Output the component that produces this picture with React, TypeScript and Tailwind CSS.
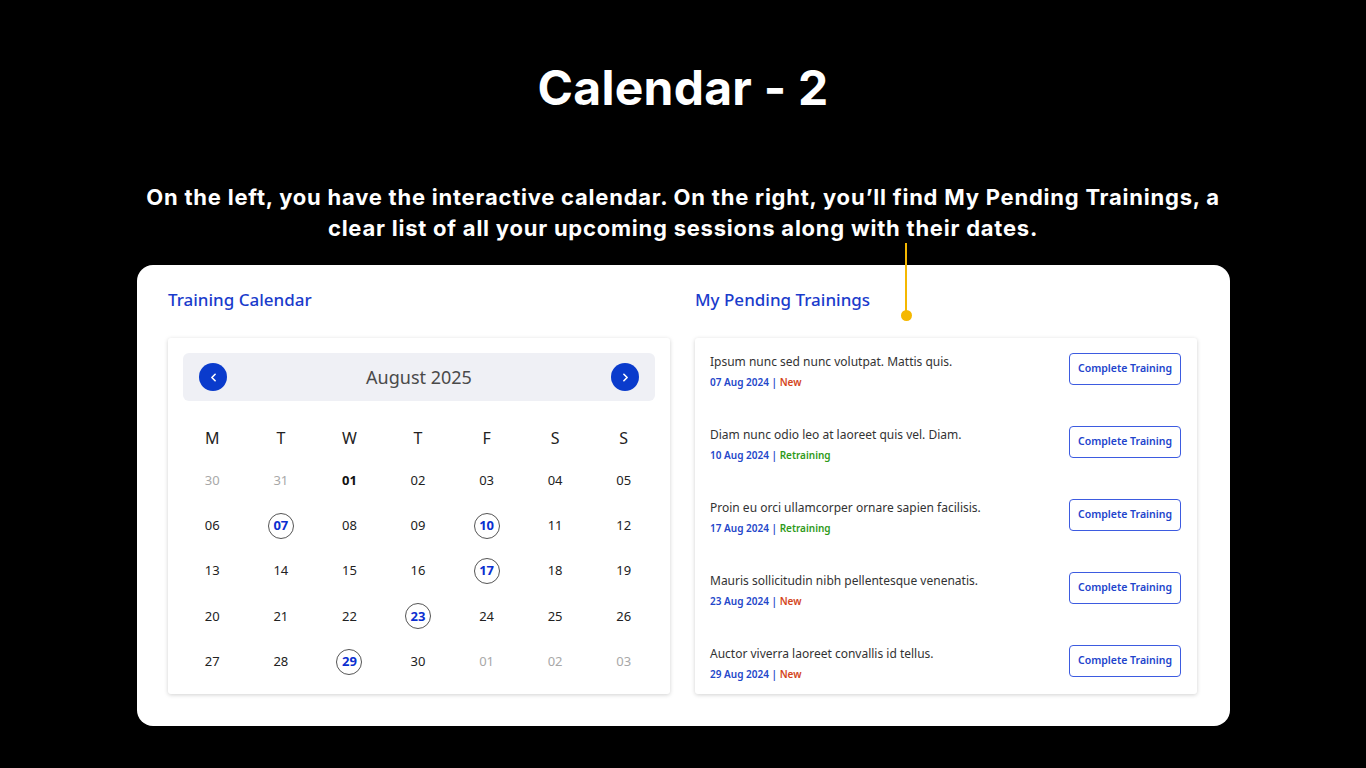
import { ChevronLeft, ChevronRight } from "lucide-react";

const weekdays = ["M", "T", "W", "T", "F", "S", "S"];

type Day = { label: string; muted?: boolean; bold?: boolean; marked?: boolean };

const days: Day[] = [
  { label: "30", muted: true },
  { label: "31", muted: true },
  { label: "01", bold: true },
  { label: "02" },
  { label: "03" },
  { label: "04" },
  { label: "05" },
  { label: "06" },
  { label: "07", marked: true },
  { label: "08" },
  { label: "09" },
  { label: "10", marked: true },
  { label: "11" },
  { label: "12" },
  { label: "13" },
  { label: "14" },
  { label: "15" },
  { label: "16" },
  { label: "17", marked: true },
  { label: "18" },
  { label: "19" },
  { label: "20" },
  { label: "21" },
  { label: "22" },
  { label: "23", marked: true },
  { label: "24" },
  { label: "25" },
  { label: "26" },
  { label: "27" },
  { label: "28" },
  { label: "29", marked: true },
  { label: "30" },
  { label: "01", muted: true },
  { label: "02", muted: true },
  { label: "03", muted: true },
];

const trainings = [
  { title: "Ipsum nunc sed nunc volutpat. Mattis quis.", date: "07 Aug 2024", kind: "New" },
  { title: "Diam nunc odio leo at laoreet quis vel. Diam.", date: "10 Aug 2024", kind: "Retraining" },
  { title: "Proin eu orci ullamcorper ornare sapien facilisis.", date: "17 Aug 2024", kind: "Retraining" },
  { title: "Mauris sollicitudin nibh pellentesque venenatis.", date: "23 Aug 2024", kind: "New" },
  { title: "Auctor viverra laoreet convallis id tellus.", date: "29 Aug 2024", kind: "New" },
];

function Calendar() {
  return (
    <div className="h-[356px] rounded-[3px] bg-white pt-[15px] shadow-[0_1px_4px_rgba(0,0,0,0.18)]">
      {/* Month header */}
      <div className="mx-[15px] flex h-[48px] items-center justify-between rounded-[6px] bg-[#eff0f5] px-[16px]">
        <button className="flex h-[28px] w-[28px] items-center justify-center rounded-full bg-[#0a3bcc] text-white">
          <ChevronLeft size={13} strokeWidth={3} />
        </button>
        <span className="text-[18px] text-[#4a4a4a]">August 2025</span>
        <button className="flex h-[28px] w-[28px] items-center justify-center rounded-full bg-[#0a3bcc] text-white">
          <ChevronRight size={13} strokeWidth={3} />
        </button>
      </div>

      <div className="ml-[10px] mr-[12px] mt-[17px] grid grid-cols-7">
        {weekdays.map((d, i) => (
          <div key={i} className="flex h-[40px] items-center justify-center text-[16px] text-[#222]">
            {d}
          </div>
        ))}
        {days.map((d, i) => (
          <div key={i} className="flex h-[45.25px] items-center justify-center">
            {d.marked ? (
              <span className="flex h-[26px] w-[26px] items-center justify-center rounded-full border border-[#555] text-[13px] font-bold text-[#0b2fd0]">
                {d.label}
              </span>
            ) : (
              <span
                className={`text-[13px] ${
                  d.muted ? "text-[#a8a8a8]" : d.bold ? "font-bold text-[#111]" : "text-[#222]"
                }`}
              >
                {d.label}
              </span>
            )}
          </div>
        ))}
      </div>
    </div>
  );
}

function PendingList() {
  return (
    <div className="flex h-[356px] flex-col gap-[41px] rounded-[3px] bg-white pb-[17px] pl-[15px] pr-[16px] pt-[15px] shadow-[0_1px_4px_rgba(0,0,0,0.18)]">
      {trainings.map((t, i) => (
        <div key={i} className="flex h-[32px] items-start justify-between">
          <div>
            <p className="text-[12px] leading-[18px] text-[#333]">{t.title}</p>
            <p className="mt-[4px] text-[10px] font-semibold leading-[14px] text-[#2346c9]">
              {t.date} |{" "}
              <span className={t.kind === "New" ? "text-[#d4461c]" : "text-[#2e9a1a]"}>{t.kind}</span>
            </p>
          </div>
          <button className="h-[32px] w-[112px] rounded-[4px] border border-[#3d5be0] text-[10.5px] font-semibold text-[#2244cc]">
            Complete Training
          </button>
        </div>
      ))}
    </div>
  );
}

export default function App() {
  return (
    <div className="relative h-[768px] w-full overflow-hidden bg-black font-['Noto_Sans',sans-serif]">
      <h1 className="pt-[59px] text-center font-['Inter',sans-serif] text-[48px] font-bold leading-[58px] tracking-[0.005em] text-white">
        Calendar - 2
      </h1>
      <p className="mx-auto mt-[65px] h-[62px] w-[1090px] text-center font-['Inter',sans-serif] text-[22px] font-bold leading-[31px] tracking-[0.035em] text-white">
        On the left, you have the interactive calendar. On the right, you’ll find My Pending Trainings, a clear list of
        all your upcoming sessions along with their dates.
      </p>

      <div className="ml-[137px] mt-[21px] w-[1093px] rounded-[16px] bg-white pb-[32px] pl-[31px] pr-[33px] pt-[23px]">
        <div className="grid grid-cols-2 gap-[25px]">
          <div>
            <h2 className="text-[17px] font-medium leading-[24px] text-[#1a3bcc]">Training Calendar</h2>
            <div className="mt-[26px]">
              <Calendar />
            </div>
          </div>
          <div>
            <h2 className="text-[17px] font-medium leading-[24px] text-[#1a3bcc]">My Pending Trainings</h2>
            <div className="mt-[26px]">
              <PendingList />
            </div>
          </div>
        </div>
      </div>

      {/* annotation pointer */}
      <div className="absolute left-[905px] top-[243px] h-[72px] w-[2px] bg-[#f5b800]" />
      <div className="absolute left-[901px] top-[310px] h-[11px] w-[11px] rounded-full bg-[#f5b800]" />
    </div>
  );
}
